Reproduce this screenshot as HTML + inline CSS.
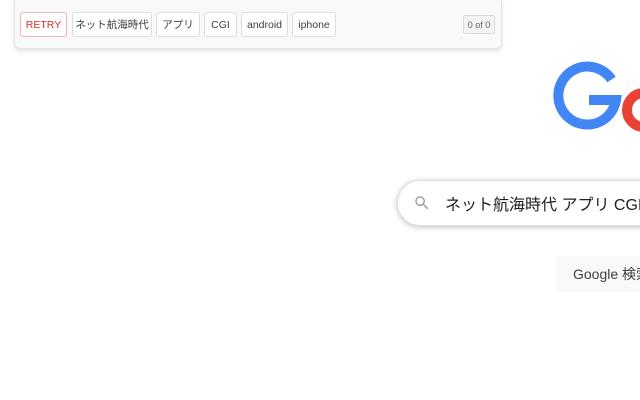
<!DOCTYPE html>
<html style="overflow:hidden"><head><meta charset="utf-8"><style>
html,body{margin:0;width:640px;height:400px;overflow:hidden}
body{background:#fff;position:relative;font-family:"Liberation Sans","Noto Sans CJK JP",sans-serif}
.bar{position:absolute;left:14px;top:-1px;width:488px;height:50px;background:#f8f9fa;border:1px solid #e3e5e8;border-top:none;border-radius:0 0 6px 6px;box-shadow:0 2px 4px rgba(0,0,0,.12);box-sizing:border-box}
.b{position:absolute;top:12px;height:25px;border:1px solid #dadce0;border-radius:3px;background:#fff;font-size:10.5px;color:#3c4043;line-height:25px;text-align:center;box-sizing:border-box;white-space:nowrap}
.cnt{position:absolute;left:463px;top:15px;width:32px;height:19px;border:1px solid #dadce0;background:#f1f3f4;font-size:9px;color:#5f6368;line-height:19px;text-align:center;border-radius:2px;box-sizing:border-box}
.search{position:absolute;left:397px;top:180px;width:300px;height:44px;border:1px solid #dfe1e5;border-radius:23px;box-shadow:0 1px 6px rgba(32,33,36,.28);background:#fff}
.q{position:absolute;left:445px;top:191px;font-size:16px;color:#202124;white-space:nowrap}
.gb{position:absolute;left:556px;top:256px;width:120px;height:36px;background:#f8f9fa;border-radius:4px;font-size:14px;color:#3c4043;line-height:36px;padding-left:17px;box-sizing:border-box;white-space:nowrap}
</style></head><body>
<div class="bar"></div>
<div class="b" style="left:20px;width:47px;color:#d93025;border-color:#f4b4ae">RETRY</div>
<div class="b" style="left:72px;width:80px">ネット航海時代</div>
<div class="b" style="left:156px;width:44px">アプリ</div>
<div class="b" style="left:204px;width:33px">CGI</div>
<div class="b" style="left:241px;width:47px">android</div>
<div class="b" style="left:292px;width:44px">iphone</div>
<div class="cnt">0 of 0</div>
<svg style="position:absolute;left:0;top:0" width="640" height="400">
<path d="M611.5 79.5 A29 29 0 1 0 616 100 L589 100" fill="none" stroke="#4285f4" stroke-width="10"/>
<circle cx="644" cy="110" r="17" fill="none" stroke="#ea4335" stroke-width="10"/>
</svg>
<div class="search"></div>
<svg style="position:absolute;left:413px;top:194px" width="18" height="18" viewBox="0 0 24 24"><path fill="#9aa0a6" d="M15.5 14h-.79l-.28-.27A6.47 6.47 0 0 0 16 9.5 6.5 6.5 0 1 0 9.5 16c1.610 0 3.090-.59 4.230-1.570l.27.28v.79l5 4.990L20.490 19l-4.990-5zm-6 0C7.010 14 5 11.990 5 9.500S7.010 5 9.500 5 14 7.010 14 9.500 11.990 14 9.500 14z"/></svg>
<div class="q">ネット航海時代 アプリ CGI android iphone</div>
<div class="gb">Google 検索</div>
</body></html>
